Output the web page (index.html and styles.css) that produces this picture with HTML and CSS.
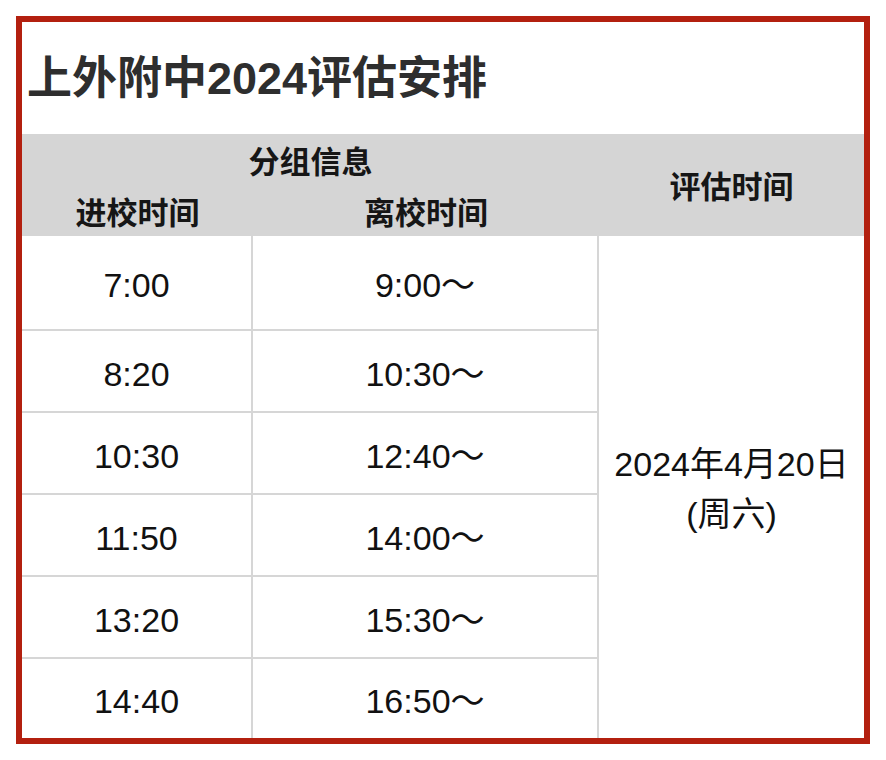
FILE: index.html
```html
<!DOCTYPE html>
<html lang="zh-CN">
<head>
<meta charset="utf-8">
<title>上外附中2024评估安排</title>
<link rel="stylesheet" href="styles.css">
</head>
<body>
<div class="card">
  <h1 class="title">上外附中2024评估安排</h1>
  <table class="schedule">
    <colgroup><col class="c1"><col class="c2"><col class="c3"></colgroup>
    <thead>
      <tr class="hrow"><th colspan="2">分组信息</th><th rowspan="2">评估时间</th></tr>
      <tr class="hrow"><th>进校时间</th><th>离校时间</th></tr>
    </thead>
    <tbody>
      <tr class="r-first"><td>7:00</td><td>9:00～</td><td rowspan="6" class="date">2024年4月20日<br>(周六)</td></tr>
      <tr class="r"><td>8:20</td><td>10:30～</td></tr>
      <tr class="r"><td>10:30</td><td>12:40～</td></tr>
      <tr class="r"><td>11:50</td><td>14:00～</td></tr>
      <tr class="r"><td>13:20</td><td>15:30～</td></tr>
      <tr class="r-last"><td>14:40</td><td>16:50～</td></tr>
    </tbody>
  </table>
</div>
</body>
</html>
```
FILE: styles.css
```css
html, body {
  margin: 0;
  padding: 0;
  background: #ffffff;
}
body {
  padding: 16px;
  font-family: "Liberation Sans", "Noto Sans CJK SC", sans-serif;
  color: #111;
}
.card {
  width: 854px;
  box-sizing: border-box;
  border: 6px solid #b3200f;
  background: #fff;
}
.title {
  margin: 0;
  height: 112px;
  line-height: 114px;
  padding-left: 5px;
  font-size: 45px;
  font-weight: bold;
  color: #2e2e2e;
  font-family: "Liberation Sans", "Noto Sans CJK SC", sans-serif;
}
.schedule {
  width: 842px;
  table-layout: fixed;
  border-collapse: separate;
  border-spacing: 0;
}
.c1 { width: 231px; }
.c2 { width: 346px; }
.c3 { width: 265px; }
.schedule th {
  background: #d5d5d5;
  font-size: 31px;
  font-weight: bold;
  color: #161616;
  font-family: "Noto Sans CJK SC", sans-serif;
  padding: 0;
  text-align: center;
  vertical-align: middle;
  line-height: 40px;
}
.hrow { height: 51px; }
.schedule td {
  padding: 5px 0 0;
  text-align: center;
  vertical-align: middle;
  font-size: 34px;
  line-height: 40px;
  color: #111;
  border-right: 2px solid #d6d6d6;
  border-bottom: 2px solid #d6d6d6;
}
.schedule td.date {
  border-right: none;
  border-bottom: none;
  line-height: 50px;
  padding-top: 4px;
}
.r-first { height: 95px; }
.r { height: 82px; }
.r-last { height: 79px; }
.r-last td { border-bottom: none; }
```
